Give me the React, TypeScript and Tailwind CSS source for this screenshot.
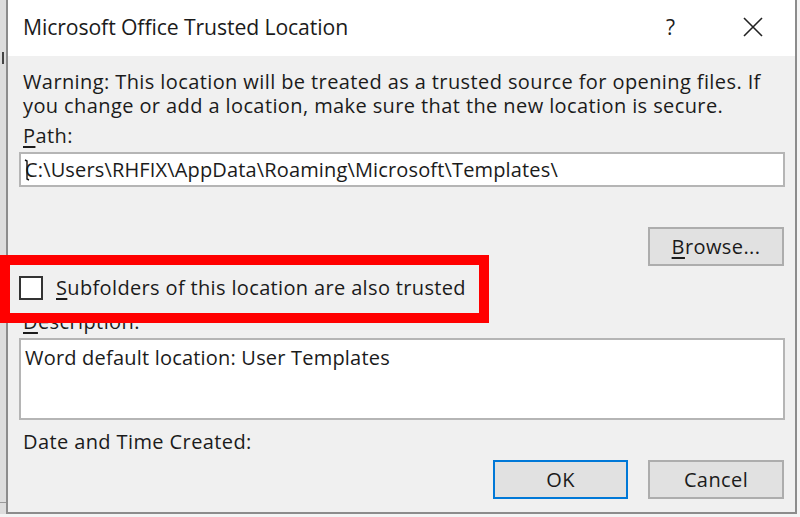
import React from "react";

const font = { fontFamily: '"Open Sans", "Noto Sans", sans-serif' };

export default function App() {
  return (
    <div
      className="relative w-[800px] h-[517px] overflow-hidden bg-[#f4f4f4] flex text-[#1b1b1b]"
      style={font}
    >
      {/* left strip (window behind) */}
      <div className="relative w-[6px] h-[514px] bg-[#dddddd] shrink-0">
        <div className="absolute left-0 top-[52px] w-[4px] h-[12px] border-r-2 border-[#444]" />
        <div className="absolute left-0 top-[502px] w-[6px] h-px bg-[#999]" />
      </div>

      {/* dialog */}
      <div className="w-[791px] h-[514px] shrink-0 flex flex-col border-l-2 border-r-2 border-b-2 border-[#8c8c8c] bg-[#f0f0f0]">
        {/* title bar */}
        <div className="h-[56px] bg-white flex items-center pl-[15px] pr-[32px] shrink-0">
          <div className="text-[21.2px] tracking-[-0.1px] leading-none mt-[-2px]">
            Microsoft Office Trusted Location
          </div>
          <div className="ml-auto flex items-center">
            <span className="text-[21px] leading-none mr-[68px] mt-[-2px]">?</span>
            <svg width="20" height="20" viewBox="0 0 20 20" className="mt-[-2px]">
              <path d="M1 1 L19 19 M19 1 L1 19" stroke="#222" strokeWidth="1.6" fill="none" />
            </svg>
          </div>
        </div>

        {/* body */}
        <div className="flex flex-col pl-[11px] pr-[10px] text-[20px] leading-[24px] tracking-[0.4px]">
          <div className="mt-[14px] pl-[4px] flex flex-col">
            <p className="leading-[24px]">Warning: This location will be treated as a trusted source for opening files. If</p>
            <p className="leading-[24px]">you change or add a location, make sure that the new location is secure.</p>
          </div>
          <div className="mt-[6px] pl-[4px]">
            <u className="underline-offset-[3px]">P</u>ath:
          </div>
          <div className="relative mt-[4px] h-[35px] bg-white border-2 border-[#b5b5b5] flex items-center pl-[4px]">
            <span className="tracking-[0.15px]">C:\Users\RHFIX\AppData\Roaming\Microsoft\Templates\</span>
            <svg className="absolute left-[3px] top-[5px]" width="6" height="22" viewBox="0 0 6 22">
              <path d="M1 1 L3 2 L3 20 L5 21" stroke="#111" strokeWidth="1.4" fill="none" />
            </svg>
          </div>
          <div className="mt-[40px] self-end mr-[1px] w-[136px] h-[39px] bg-[#e1e1e1] border-2 border-[#adadad] flex items-center justify-center">
            <span>
              <u className="underline-offset-[3px]">B</u>rowse...
            </span>
          </div>
          <div className="mt-[10px] h-[24px] flex items-center">
            <div className="w-[24px] h-[24px] bg-white border-2 border-[#333333] shrink-0" />
            <span className="ml-[13px] tracking-[0.35px]">
              <u className="underline-offset-[3px]">S</u>ubfolders of this location are also trusted
            </span>
          </div>
          <div className="mt-[10px] pl-[4px]">
            <u className="underline-offset-[3px]">D</u>escription:
          </div>
          <div className="mt-[4px] h-[82px] bg-white border-2 border-[#b5b5b5] pl-[4px] pt-[6px] tracking-[0.2px]">
            Word default location: User Templates
          </div>
          <div className="mt-[10px] pl-[4px]">Date and Time Created:</div>
          <div className="mt-[6px] flex justify-end gap-[20px] mr-[1px]">
            <div className="w-[135px] h-[39px] bg-[#e1e1e1] border-2 border-[#0078d7] flex items-center justify-center">
              OK
            </div>
            <div className="w-[136px] h-[39px] bg-[#e1e1e1] border-2 border-[#adadad] flex items-center justify-center">
              Cancel
            </div>
          </div>
        </div>
      </div>

      {/* red annotation rectangle */}
      <div className="absolute left-0 top-[255px] w-[489px] h-[68px] border-[10px] border-[#ff0000]" />
    </div>
  );
}
